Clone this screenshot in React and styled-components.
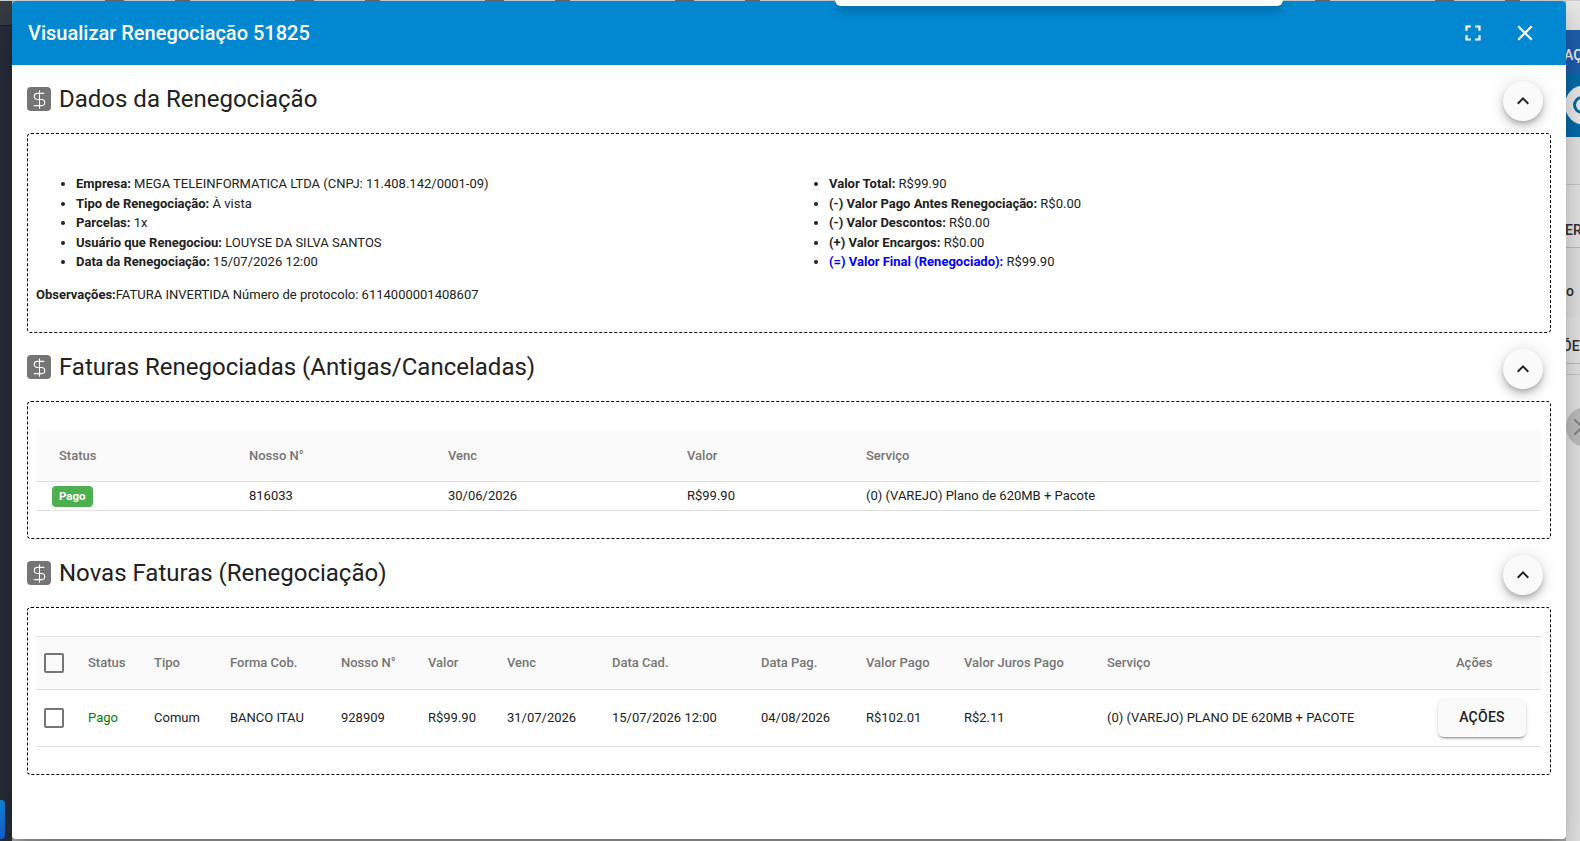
import styled, { createGlobalStyle } from "styled-components"
import { DollarSign, X } from "lucide-react"

const GlobalStyle = createGlobalStyle`
html, body {
  margin: 0;
  padding: 0;
  height: 841px;
  overflow: hidden;
  background: #b4b4b4;
  font-family: Roboto, "Liberation Sans", sans-serif;
  color: #212121;
}
`

const Page = styled.div`
display: flex;
flex-direction: column;
width: 1580px;
height: 841px;
overflow: hidden;
`
const TopEdge = styled.div`
flex: 0 0 1px;
background: repeating-linear-gradient(90deg, #d4d4d4 0 105px, #6a6a6a 105px 124px, #d4d4d4 124px 175px, #6a6a6a 175px 190px);
`
const Stage = styled.div`
flex: 1;
display: flex;
min-height: 0;
`
const LeftRail = styled.div`
flex: 0 0 12px;
display: flex;
flex-direction: column;
justify-content: space-between;
background: #2a2f3b;
`
const RailTop = styled.div`
height: 24px;
background: #3a3d45;
border-bottom: 1px solid #1d2029;
`
const RailBlue = styled.div`
width: 5px;
height: 39px;
margin-bottom: 2px;
border-radius: 0 4px 4px 0;
background: linear-gradient(180deg, #1190e8, #1b62d8);
`
const RightRail = styled.div`
flex: 0 0 14px;
display: flex;
flex-direction: column;
overflow: hidden;
background: #ededed;
font-size: 14px;
font-weight: 500;
color: #333;
white-space: nowrap;
`
const RailGap = styled.div`
height: ${props => props.$h}px;
flex: 0 0 auto;
background: ${props => props.$bg || "transparent"};
border-bottom: ${props => props.$line ? "1px solid #d2d2d2" : "none"};
`
const RailButton = styled.div`
height: ${props => props.$h}px;
flex: 0 0 auto;
display: flex;
align-items: center;
padding-top: ${props => props.$top || 0}px;
box-sizing: border-box;
text-indent: ${props => props.$indent}px;
color: ${props => props.$color || "#333"};
background: ${props => props.$bg || "#efefef"};
border-bottom: ${props => props.$line ? "1px solid #c4c4c4" : "none"};
`
const RailSearch = styled.div`
flex: 0 0 64px;
display: flex;
align-items: center;
background: #0770b0;
`
const SearchDisc = styled.div`
width: 40px;
height: 40px;
margin-left: -1px;
flex: 0 0 auto;
display: flex;
align-items: center;
border-radius: 50%;
background: #f5f5f5;
`
const SearchRing = styled.div`
width: 18px;
height: 18px;
margin-left: 8px;
box-sizing: border-box;
border: 3px solid #0770b0;
border-radius: 50%;
`
const RailDisc = styled.div`
width: 40px;
height: 40px;
margin-top: 32px;
padding-left: 2px;
box-sizing: border-box;
flex: 0 0 auto;
display: flex;
align-items: center;
border-radius: 50%;
background: #c6c6c6;
color: #8b8b8b;
`

const Modal = styled.div`
position: relative;
z-index: 2;
flex: 1;
display: flex;
flex-direction: column;
height: 838px;
background: #fff;
border-radius: 4px;
box-shadow: 0 11px 15px -7px rgba(0,0,0,.2), 0 24px 38px 3px rgba(0,0,0,.14), 0 9px 46px 8px rgba(0,0,0,.12);
overflow: hidden;
`
const ModalHeader = styled.header`
flex: 0 0 64px;
display: flex;
align-items: center;
justify-content: space-between;
padding: 0 28px 0 16px;
background: #0288d1;
color: #fff;
`
const ModalTitle = styled.h2`
margin: 0;
font-size: 20px;
font-weight: 500;
line-height: 24px;
`
const HeaderActions = styled.div`
display: flex;
align-items: center;
gap: 26px;
`
const HeaderIcon = styled.svg`
width: 26px;
height: 26px;
fill: #fff;
display: block;
`
const NoticePill = styled.div`
position: absolute;
z-index: 3;
top: 0;
left: 835px;
width: 448px;
height: 6px;
background: #fff;
border-radius: 0 0 12px 12px;
box-shadow: 0 4px 10px rgba(0,0,0,.3);
`
const Content = styled.div`
flex: 1;
padding: 0 15px;
`
const SectionHeader = styled.div`
height: ${props => props.$h}px;
display: flex;
align-items: center;
justify-content: space-between;
padding-right: 8px;
`
const SectionTitle = styled.div`
display: flex;
align-items: center;
gap: 8px;
`
const MoneyBadge = styled.span`
width: 24px;
height: 24px;
display: flex;
align-items: center;
justify-content: center;
border-radius: 4px;
background: #757575;
color: #fff;
`
const Heading = styled.h3`
margin: 0;
font-size: 24px;
font-weight: 400;
line-height: 32px;
color: #212121;
`
const CollapseButton = styled.button`
width: 40px;
height: 40px;
margin-top: 4px;
padding: 0;
display: flex;
align-items: center;
justify-content: center;
border: 0;
border-radius: 50%;
background: #fafafa;
box-shadow: 0 3px 5px -1px rgba(0,0,0,.2), 0 6px 10px 0 rgba(0,0,0,.14), 0 1px 18px 0 rgba(0,0,0,.12);
`
const ChevronIcon = styled.svg`
width: 24px;
height: 24px;
fill: #212121;
display: block;
`
const DashedBox = styled.section`
box-sizing: border-box;
height: ${props => props.$h}px;
padding: ${props => props.$pt}px 9px 27px 8px;
border: 1px dashed #000;
border-radius: 4px;
font-size: 13px;
line-height: 19.5px;
color: #212121;
`
const InfoColumns = styled.div`
display: grid;
grid-template-columns: 753px 1fr;
`
const InfoList = styled.ul`
margin: 13px 0;
padding-left: 40px;
`
const Observation = styled.div`
margin: 0;
`
const Highlight = styled.b`
color: ${props => props.$color || "inherit"};
font-weight: 700;
`
const Row = styled.div`
display: grid;
grid-template-columns: ${props => props.$cols};
align-items: center;
box-sizing: border-box;
height: ${props => props.$h}px;
padding-left: ${props => props.$pad}px;
border-top: ${props => props.$top ? "1px solid #e0e0e0" : "none"};
border-bottom: 1px solid #e0e0e0;
`
const HeadRow = styled(Row)`
background: #fafafa;
color: #757575;
font-weight: 500;
`
const Cell = styled.div`
white-space: nowrap;
padding-left: ${props => props.$indent || 0}px;
color: ${props => props.$color || "inherit"};
`
const StatusBadge = styled.span`
display: inline-block;
margin-left: -7px;
padding: 0 7px;
height: 21px;
line-height: 21px;
border-radius: 4px;
background: #4caf50;
color: #fff;
font-size: 11.5px;
font-weight: 700;
`
const CheckBox = styled.span`
display: block;
box-sizing: border-box;
width: 20px;
height: 20px;
border: 2px solid #757575;
border-radius: 2px;
`
const ActionButton = styled.button`
width: 88px;
height: 37px;
padding: 0 0 2px;
border: 0;
border-radius: 6px;
background: #fafafa;
color: #212121;
font-family: inherit;
font-size: 14px;
font-weight: 500;
letter-spacing: .25px;
box-shadow: 0 3px 1px -2px rgba(0,0,0,.2), 0 2px 2px 0 rgba(0,0,0,.14), 0 1px 5px 0 rgba(0,0,0,.12);
`

const OLD_COLS = "190px 199px 239px 179px 1fr"
const NEW_COLS = "44px 66px 76px 111px 87px 79px 105px 149px 105px 98px 143px 331px 1fr"

const Section = ({ title, h, children }) => (
  <>
    <SectionHeader $h={h}>
      <SectionTitle>
        <MoneyBadge><DollarSign size={21} strokeWidth={1.2} /></MoneyBadge>
        <Heading>{title}</Heading>
      </SectionTitle>
      <CollapseButton aria-label="Recolher">
        <ChevronIcon viewBox="0 0 24 24"><path d="M12 8l-6 6 1.41 1.41L12 10.83l4.59 4.58L18 14z" /></ChevronIcon>
      </CollapseButton>
    </SectionHeader>
    {children}
  </>
)

const App = () => {
  return (
    <Page>
      <GlobalStyle />
      <TopEdge />
      <NoticePill />
      <Stage>
        <LeftRail>
          <RailTop />
          <RailBlue />
        </LeftRail>
        <Modal>
          <ModalHeader>
            <ModalTitle>Visualizar Renegociação 51825</ModalTitle>
            <HeaderActions>
              <HeaderIcon viewBox="0 0 24 24"><path d="M7 14H5v5h5v-2H7v-3zm-2-4h2V7h3V5H5v5zm12 7h-3v2h5v-5h-2v3zM14 5v2h3v3h2V5h-5z" /></HeaderIcon>
              <HeaderIcon viewBox="0 0 24 24"><path d="M19 6.41L17.59 5 12 10.59 6.41 5 5 6.41 10.59 12 5 17.59 6.41 19 12 13.41 17.59 19 19 17.59 13.41 12z" /></HeaderIcon>
            </HeaderActions>
          </ModalHeader>
          <Content>
            <Section title="Dados da Renegociação" h={68}>
              <DashedBox $h={200} $pt={27}>
                <InfoColumns>
                  <InfoList>
                    <li><Highlight>Empresa:</Highlight> MEGA TELEINFORMATICA LTDA (CNPJ: 11.408.142/0001-09)</li>
                    <li><Highlight>Tipo de Renegociação:</Highlight> À vista</li>
                    <li><Highlight>Parcelas:</Highlight> 1x</li>
                    <li><Highlight>Usuário que Renegociou:</Highlight> LOUYSE DA SILVA SANTOS</li>
                    <li><Highlight>Data da Renegociação:</Highlight> 15/07/2026 12:00</li>
                  </InfoList>
                  <InfoList>
                    <li><Highlight>Valor Total:</Highlight> R$99.90</li>
                    <li><Highlight>(-) Valor Pago Antes Renegociação:</Highlight> R$0.00</li>
                    <li><Highlight>(-) Valor Descontos:</Highlight> R$0.00</li>
                    <li><Highlight>(+) Valor Encargos:</Highlight> R$0.00</li>
                    <li><Highlight $color="#0000ff">(=) Valor Final (Renegociado):</Highlight> R$99.90</li>
                  </InfoList>
                </InfoColumns>
                <Observation><Highlight>Observações:</Highlight>FATURA INVERTIDA Número de protocolo: 6114000001408607</Observation>
              </DashedBox>
            </Section>
            <Section title="Faturas Renegociadas (Antigas/Canceladas)" h={68}>
              <DashedBox $h={138} $pt={28}>
                <HeadRow $cols={OLD_COLS} $h={52} $pad={23}>
                  <Cell>Status</Cell>
                  <Cell>Nosso N°</Cell>
                  <Cell>Venc</Cell>
                  <Cell>Valor</Cell>
                  <Cell>Serviço</Cell>
                </HeadRow>
                <Row $cols={OLD_COLS} $h={29} $pad={23}>
                  <Cell><StatusBadge>Pago</StatusBadge></Cell>
                  <Cell>816033</Cell>
                  <Cell>30/06/2026</Cell>
                  <Cell>R$99.90</Cell>
                  <Cell>(0) (VAREJO) Plano de 620MB + Pacote</Cell>
                </Row>
              </DashedBox>
            </Section>
            <Section title="Novas Faturas (Renegociação)" h={68}>
              <DashedBox $h={168} $pt={28}>
                <HeadRow $cols={NEW_COLS} $h={54} $pad={8} $top>
                  <Cell><CheckBox /></Cell>
                  <Cell>Status</Cell>
                  <Cell>Tipo</Cell>
                  <Cell>Forma Cob.</Cell>
                  <Cell>Nosso N°</Cell>
                  <Cell>Valor</Cell>
                  <Cell>Venc</Cell>
                  <Cell>Data Cad.</Cell>
                  <Cell>Data Pag.</Cell>
                  <Cell>Valor Pago</Cell>
                  <Cell>Valor Juros Pago</Cell>
                  <Cell>Serviço</Cell>
                  <Cell $indent={18}>Ações</Cell>
                </HeadRow>
                <Row $cols={NEW_COLS} $h={57} $pad={8}>
                  <Cell><CheckBox /></Cell>
                  <Cell $color="#008000">Pago</Cell>
                  <Cell>Comum</Cell>
                  <Cell>BANCO ITAU</Cell>
                  <Cell>928909</Cell>
                  <Cell>R$99.90</Cell>
                  <Cell>31/07/2026</Cell>
                  <Cell>15/07/2026 12:00</Cell>
                  <Cell>04/08/2026</Cell>
                  <Cell>R$102.01</Cell>
                  <Cell>R$2.11</Cell>
                  <Cell>(0) (VAREJO) PLANO DE 620MB + PACOTE</Cell>
                  <Cell><ActionButton>AÇÕES</ActionButton></Cell>
                </Row>
              </DashedBox>
            </Section>
          </Content>
        </Modal>
        <RightRail>
          <RailGap $h={29} />
          <RailButton $h={43} $indent={-2} $top={6} $bg="#1e63b4" $color="#fff">AÇ</RailButton>
          <RailSearch>
            <SearchDisc><SearchRing /></SearchDisc>
          </RailSearch>
          <RailGap $h={47} $line />
          <RailButton $h={63} $indent={-1} $top={28} $line>ER</RailButton>
          <RailButton $h={69} $indent={0} $top={17} $bg="#ebebeb">o</RailButton>
          <RailButton $h={47} $indent={-4} $top={12} $line $bg="#efefef">ÕE</RailButton>
          <RailGap $h={10} $line />
          <RailDisc><X size={28} strokeWidth={1.8} /></RailDisc>
        </RightRail>
      </Stage>
    </Page>
  )
}

export default App
